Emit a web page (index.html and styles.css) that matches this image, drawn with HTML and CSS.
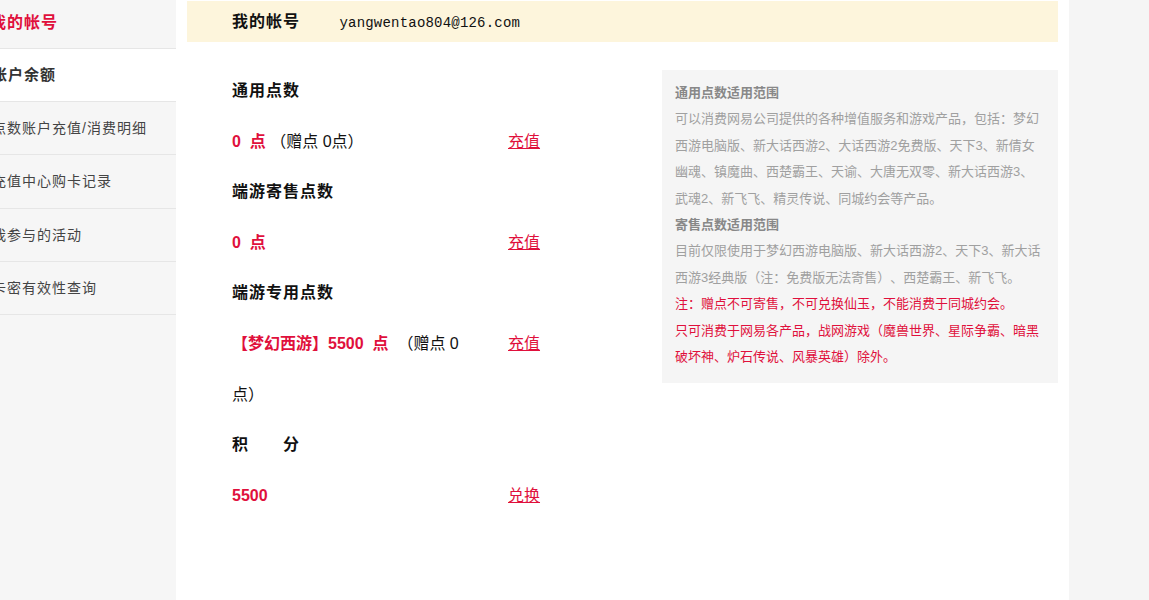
FILE: index.html
```html
<!DOCTYPE html>
<html lang="zh-CN">
<head>
    <meta charset="UTF-8">
    <meta name="viewport" content="width=device-width, initial-scale=1.0">
    <title>账户余额</title>
    <link rel="stylesheet" href="styles.css">
</head>
<body>
    <div class="wrap">
        <ul class="side-nav">
            <li class="nav-title">我的帐号</li>
            <li class="active">账户余额</li>
            <li>点数账户充值/消费明细</li>
            <li>充值中心购卡记录</li>
            <li>我参与的活动</li>
            <li>卡密有效性查询</li>
        </ul>

        <div class="main">
            <div class="account-bar">
                <span class="account-label">我的帐号</span>
                <span class="account-email">yangwentao804@126.com</span>
            </div>

            <div class="content">
                <div class="points">
                    <div class="label">通用点数</div>
                    <div class="value"><b>0&nbsp; 点</b> （赠点 0点）</div>
                    <div class="action"><a href="#">充值</a></div>

                    <div class="label">端游寄售点数</div>
                    <div class="value"><b>0&nbsp; 点</b></div>
                    <div class="action"><a href="#">充值</a></div>

                    <div class="label">端游专用点数</div>
                    <div class="value"><b>【梦幻西游】5500&nbsp; 点</b> &nbsp;（赠点 0<br>点）</div>
                    <div class="action"><a href="#">充值</a></div>

                    <div class="label">积&emsp;&emsp;分</div>
                    <div class="value"><b>5500</b></div>
                    <div class="action"><a href="#">兑换</a></div>
                </div>

                <div class="scope">
                    <h4>通用点数适用范围</h4>
                    <p>可以消费网易公司提供的各种增值服务和游戏产品，包括：梦幻西游电脑版、新大话西游2、大话西游2免费版、天下3、新倩女幽魂、镇魔曲、西楚霸王、天谕、大唐无双零、新大话西游3、武魂2、新飞飞、精灵传说、同城约会等产品。</p>
                    <h4>寄售点数适用范围</h4>
                    <p>目前仅限使用于梦幻西游电脑版、新大话西游2、天下3、新大话西游3经典版（注：免费版无法寄售）、西楚霸王、新飞飞。</p>
                    <p class="note">注：赠点不可寄售，不可兑换仙玉，不能消费于同城约会。</p>
                    <p class="note">只可消费于网易各产品，战网游戏（魔兽世界、星际争霸、暗黑破坏神、炉石传说、风暴英雄）除外。</p>
                </div>
            </div>
        </div>
    </div>
</body>
</html>
```

FILE: styles.css
```css
body {
    margin: 0;
    background: #f5f5f5;
    font-family: "Liberation Sans", "Noto Sans CJK SC", sans-serif;
    color: #222;
    text-spacing-trim: space-all;
    overflow: hidden;
}
.wrap {
    display: flex;
    margin-left: -26px;
    min-height: 100vh;
}

/* left menu */
.side-nav {
    width: 202px;
    margin: 0;
    padding: 0;
    list-style: none;
    background: #f6f6f6;
}
.side-nav li {
    height: 52.2px;
    line-height: 52.2px;
    padding-left: 18px;
    border-bottom: 1px solid #e6e6e6;
    font-size: 14px;
    letter-spacing: 1px;
    color: #444;
    white-space: nowrap;
    overflow: hidden;
}
.side-nav .nav-title {
    height: 48px;
    line-height: 46px;
    padding-left: 16px;
    font-size: 16px;
    font-weight: bold;
    color: #e0103c;
}
.side-nav .active {
    background: #fff;
    font-weight: bold;
    font-size: 15px;
    color: #333;
}

/* right panel */
.main {
    width: 871px;
    padding: 1px 11px 0;
    background: #fff;
}
.account-bar {
    height: 41px;
    line-height: 41px;
    padding-left: 45px;
    background: #fdf5dc;
}
.account-label {
    font-size: 16px;
    font-weight: bold;
    letter-spacing: 1px;
    color: #111;
}
.account-email {
    margin-left: 35px;
    font-family: "Liberation Mono", monospace;
    font-size: 14px;
    letter-spacing: 0.2px;
    color: #111;
}

.content {
    display: flex;
    justify-content: space-between;
    padding: 24px 0 0 45px;
}
.points {
    display: grid;
    grid-template-columns: 276px 60px;
    grid-auto-rows: min-content;
    font-size: 16px;
    line-height: 50.6px;
}
.points .label {
    grid-column: 1 / 3;
    font-weight: bold;
    letter-spacing: 1px;
    color: #111;
}
.points .value {
    padding-right: 14px;
    color: #111;
}
.points .value b {
    color: #e0103c;
}
.points .action a {
    color: #e0103c;
    text-decoration: underline;
}

.scope {
    width: 370px;
    margin-top: 4px;
    padding: 10px 13px 13px;
    background: #f5f5f5;
    font-size: 13px;
    line-height: 26.4px;
    align-self: flex-start;
}
.scope h4 {
    margin: 0;
    font-size: 13px;
    color: #888;
}
.scope p {
    margin: 0;
    color: #a0a0a0;
}
.scope .note {
    color: #e0103c;
}
```
